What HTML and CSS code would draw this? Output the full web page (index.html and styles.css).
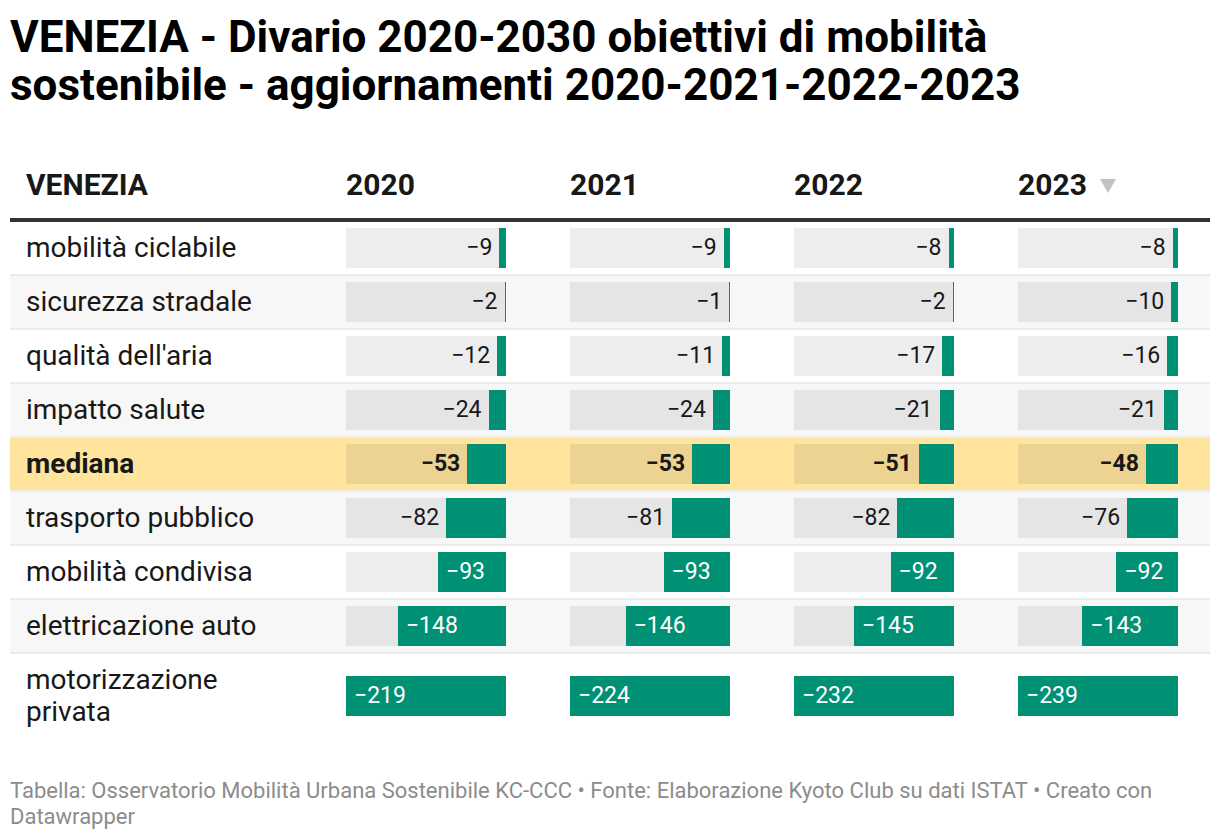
FILE: index.html
```html
<!DOCTYPE html>
<html lang="it">
<head>
<meta charset="utf-8">
<title>VENEZIA - Divario 2020-2030</title>
<link rel="stylesheet" href="styles.css">
</head>
<body>
<div class="chart">
  <h1 class="title">VENEZIA - Divario 2020-2030 obiettivi di mobilità sostenibile - aggiornamenti 2020-2021-2022-2023</h1>

  <div class="table">
    <div class="row head">
      <div class="cell label">VENEZIA</div>
      <div class="cell year">2020</div>
      <div class="cell year">2021</div>
      <div class="cell year">2022</div>
      <div class="cell year">2023 <svg class="sort" width="16" height="14" viewBox="0 0 16 14"><path d="M0 0H16L8 14Z" fill="#c2c2c2"/></svg></div>
    </div>

    <div class="row">
      <div class="cell label">mobilità ciclabile</div>
      <div class="cell"><div class="bar"><span class="val out">−9</span><div class="fill" style="width:6.6px"></div></div></div>
      <div class="cell"><div class="bar"><span class="val out">−9</span><div class="fill" style="width:6.4px"></div></div></div>
      <div class="cell"><div class="bar"><span class="val out">−8</span><div class="fill" style="width:5.5px"></div></div></div>
      <div class="cell"><div class="bar"><span class="val out">−8</span><div class="fill" style="width:5.4px"></div></div></div>
    </div>

    <div class="row alt">
      <div class="cell label">sicurezza stradale</div>
      <div class="cell"><div class="bar"><span class="val out">−2</span><div class="fill" style="width:1.5px"></div></div></div>
      <div class="cell"><div class="bar"><span class="val out">−1</span><div class="fill" style="width:0.8px"></div></div></div>
      <div class="cell"><div class="bar"><span class="val out">−2</span><div class="fill" style="width:1.4px"></div></div></div>
      <div class="cell"><div class="bar"><span class="val out">−10</span><div class="fill" style="width:6.7px"></div></div></div>
    </div>

    <div class="row">
      <div class="cell label">qualità dell'aria</div>
      <div class="cell"><div class="bar"><span class="val out">−12</span><div class="fill" style="width:8.8px"></div></div></div>
      <div class="cell"><div class="bar"><span class="val out">−11</span><div class="fill" style="width:7.9px"></div></div></div>
      <div class="cell"><div class="bar"><span class="val out">−17</span><div class="fill" style="width:11.7px"></div></div></div>
      <div class="cell"><div class="bar"><span class="val out">−16</span><div class="fill" style="width:10.7px"></div></div></div>
    </div>

    <div class="row alt">
      <div class="cell label">impatto salute</div>
      <div class="cell"><div class="bar"><span class="val out">−24</span><div class="fill" style="width:17.5px"></div></div></div>
      <div class="cell"><div class="bar"><span class="val out">−24</span><div class="fill" style="width:17.1px"></div></div></div>
      <div class="cell"><div class="bar"><span class="val out">−21</span><div class="fill" style="width:14.5px"></div></div></div>
      <div class="cell"><div class="bar"><span class="val out">−21</span><div class="fill" style="width:14.1px"></div></div></div>
    </div>

    <div class="row highlight">
      <div class="cell label">mediana</div>
      <div class="cell"><div class="bar"><span class="val out">−53</span><div class="fill" style="width:38.7px"></div></div></div>
      <div class="cell"><div class="bar"><span class="val out">−53</span><div class="fill" style="width:37.9px"></div></div></div>
      <div class="cell"><div class="bar"><span class="val out">−51</span><div class="fill" style="width:35.2px"></div></div></div>
      <div class="cell"><div class="bar"><span class="val out">−48</span><div class="fill" style="width:32.1px"></div></div></div>
    </div>

    <div class="row alt">
      <div class="cell label">trasporto pubblico</div>
      <div class="cell"><div class="bar"><span class="val out">−82</span><div class="fill" style="width:59.9px"></div></div></div>
      <div class="cell"><div class="bar"><span class="val out">−81</span><div class="fill" style="width:57.9px"></div></div></div>
      <div class="cell"><div class="bar"><span class="val out">−82</span><div class="fill" style="width:56.6px"></div></div></div>
      <div class="cell"><div class="bar"><span class="val out">−76</span><div class="fill" style="width:50.9px"></div></div></div>
    </div>

    <div class="row">
      <div class="cell label">mobilità condivisa</div>
      <div class="cell"><div class="bar"><div class="fill" style="width:68px"><span class="val in">−93</span></div></div></div>
      <div class="cell"><div class="bar"><div class="fill" style="width:66.4px"><span class="val in">−93</span></div></div></div>
      <div class="cell"><div class="bar"><div class="fill" style="width:63.4px"><span class="val in">−92</span></div></div></div>
      <div class="cell"><div class="bar"><div class="fill" style="width:61.6px"><span class="val in">−92</span></div></div></div>
    </div>

    <div class="row alt">
      <div class="cell label">elettricazione auto</div>
      <div class="cell"><div class="bar"><div class="fill" style="width:108.1px"><span class="val in">−148</span></div></div></div>
      <div class="cell"><div class="bar"><div class="fill" style="width:104.3px"><span class="val in">−146</span></div></div></div>
      <div class="cell"><div class="bar"><div class="fill" style="width:100px"><span class="val in">−145</span></div></div></div>
      <div class="cell"><div class="bar"><div class="fill" style="width:95.7px"><span class="val in">−143</span></div></div></div>
    </div>

    <div class="row last">
      <div class="cell label">motorizzazione<br>privata</div>
      <div class="cell"><div class="bar"><div class="fill" style="width:160px"><span class="val in">−219</span></div></div></div>
      <div class="cell"><div class="bar"><div class="fill" style="width:160px"><span class="val in">−224</span></div></div></div>
      <div class="cell"><div class="bar"><div class="fill" style="width:160px"><span class="val in">−232</span></div></div></div>
      <div class="cell"><div class="bar"><div class="fill" style="width:160px"><span class="val in">−239</span></div></div></div>
    </div>
  </div>

  <p class="footer">Tabella: Osservatorio Mobilità Urbana Sostenibile KC-CCC • Fonte: Elaborazione Kyoto Club su dati ISTAT • Creato con Datawrapper</p>
</div>
</body>
</html>
```

FILE: styles.css
```css
* { box-sizing: border-box; }

html, body {
  margin: 0;
  padding: 0;
  background: #ffffff;
}

body {
  font-family: Roboto, "Liberation Sans", Arial, sans-serif;
  color: #181818;
}

.chart {
  width: 1220px;
  padding: 0 10px;
}

.title {
  margin: 13px 0 0;
  font-size: 44px;
  line-height: 48px;
  font-weight: 700;
  color: #000000;
}

.table {
  margin-top: 59px;
}

.row {
  display: grid;
  grid-template-columns: 336px 224px 224px 224px 192px;
  align-items: center;
  border-bottom: 2px solid #ececec;
}

.row.alt { background: #f7f7f7; }

.row.highlight {
  background: #fee49c;
  font-weight: 700;
}

.row.last { border-bottom: none; }

.row.head {
  align-items: end;
  border-bottom: 4px solid #333333;
  padding-bottom: 16px;
  font-weight: 700;
  font-size: 30px;
  line-height: 34px;
}

.cell.label {
  padding: 10px 0 10px 16px;
  font-size: 28px;
  line-height: 32px;
}

.row.head .cell.label { padding: 0 0 0 16px; font-size: 30px; line-height: 34px; }

.cell.year {
  display: flex;
  align-items: center;
  gap: 13px;
}

.sort { margin-top: 2px; }

.bar {
  width: 160px;
  height: 40px;
  margin: 6px 0;
  background: rgba(0, 0, 0, 0.07);
  display: flex;
  justify-content: flex-end;
  align-items: stretch;
}

.fill {
  background: #009175;
  display: flex;
  align-items: center;
}

.val {
  font-size: 23px;
  line-height: 40px;
  white-space: nowrap;
}

.val.out {
  padding-right: 7px;
  color: #181818;
}

.val.in {
  padding-left: 8px;
  color: #ffffff;
}

.footer {
  margin: 40px 0 0;
  font-size: 22px;
  line-height: 26px;
  color: #8c8c8c;
}
```
